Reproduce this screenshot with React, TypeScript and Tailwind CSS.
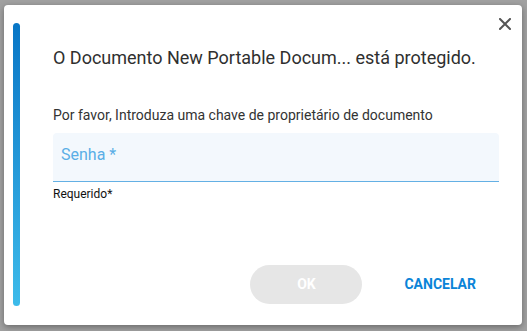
import React, { useState } from "react";

const App: React.FC = () => {
  const [password, setPassword] = useState<string>("");

  return (
    <div
      className="w-[527px] h-[331px] bg-[#a1a1a1] pt-[5px] pl-[4px] overflow-hidden"
      style={{ fontFamily: "Roboto, 'Liberation Sans', sans-serif" }}
    >
      <div className="relative w-[518px] h-[320px] bg-white rounded-[4px] shadow-[0_2px_6px_rgba(0,0,0,0.35)] flex">
        {/* accent bar */}
        <div className="pl-[9px] pt-[18px] pb-[19px]">
          <div className="w-[7px] h-full rounded-full bg-gradient-to-b from-[#0876c6] to-[#3dbbea]" />
        </div>

        {/* close */}
        <button className="absolute right-[11px] top-[13px] w-[12px] h-[12px]">
          <svg viewBox="0 0 12 12" width="12" height="12">
            <path d="M1 1L11 11M11 1L1 11" stroke="#555" strokeWidth="2" strokeLinecap="square" />
          </svg>
        </button>

        <div className="flex-1 flex flex-col ml-[33px] pr-[23px] pt-[41px] pb-[21px]">
          <h1 className="text-[18px] leading-[24px] text-[#2f2f2f] whitespace-nowrap">
            O Documento New Portable Docum... está protegido.
          </h1>
          <p className="mt-[35px] text-[14px] leading-[20px] text-[#333]">
            Por favor, Introduza uma chave de proprietário de documento
          </p>
          <div className="mt-[8px] h-[49px] bg-[#f3f8fd] rounded-t-[4px] border-b border-[#64b0e4] pl-[8px] pt-[10px]">
            <input
              type="password"
              value={password}
              onChange={(e) => setPassword(e.target.value)}
              placeholder="Senha *"
              className="w-full bg-transparent outline-none text-[16px] leading-[24px] text-[#333] placeholder:text-[#5aaee6]"
            />
          </div>
          <p className="mt-[4px] text-[12px] leading-[16px] text-[#111]">Requerido*</p>

          <div className="flex-1" />

          <div className="flex justify-end items-center gap-[26px] pr-[7px]">
            <button
              disabled
              className="w-[112px] h-[39px] rounded-full bg-[#e6e6e6] text-white font-bold text-[14px]"
            >
              OK
            </button>
            <button className="h-[39px] px-[16px] text-[#0a84d8] font-bold text-[14px]">
              CANCELAR
            </button>
          </div>
        </div>
      </div>
    </div>
  );
};

export default App;
